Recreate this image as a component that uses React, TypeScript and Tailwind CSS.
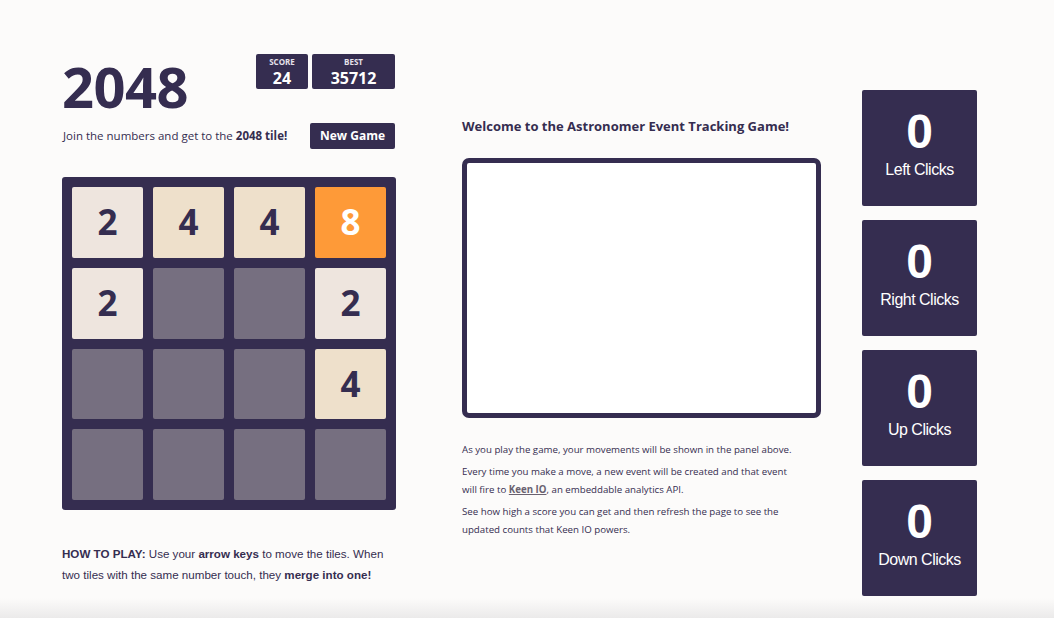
import React from "react";

const tiles: (number | null)[] = [2, 4, 4, 8, 2, null, null, 2, null, null, null, 4, null, null, null, null];

function tileClass(v: number | null) {
  if (v === null) return "bg-[#766f80]";
  if (v === 2) return "bg-[#eee5de] text-[#352d50]";
  if (v === 4) return "bg-[#eee0cb] text-[#352d50]";
  return "bg-[#fe9a38] text-white";
}

const counters = ["Left Clicks", "Right Clicks", "Up Clicks", "Down Clicks"];

export default function App() {
  return (
    <div
      className="relative w-[1054px] h-[618px] overflow-hidden bg-[#fcfbfa] text-[#352d50]"
      style={{ fontFamily: '"Open Sans", "Noto Sans", sans-serif' }}
    >
      <div className="flex pl-[62px]">
        {/* Left column */}
        <div className="w-[334px] pt-[54px]">
          <div className="flex justify-between items-start">
            <h1 className="text-[56px] font-bold leading-none mt-[4px] tracking-[-0.5px]">2048</h1>
            <div className="flex gap-[4px] mr-[1px]">
              <div className="w-[52px] h-[35px] bg-[#352d50] rounded-[2px] flex flex-col items-center justify-center text-white">
                <span className="text-[8px] font-bold leading-none text-[#e5e0ea]">SCORE</span>
                <span className="text-[16px] font-bold leading-none mt-[4px]">24</span>
              </div>
              <div className="w-[83px] h-[35px] bg-[#352d50] rounded-[2px] flex flex-col items-center justify-center text-white">
                <span className="text-[8px] font-bold leading-none text-[#e5e0ea]">BEST</span>
                <span className="text-[16px] font-bold leading-none mt-[4px]">35712</span>
              </div>
            </div>
          </div>
          <div className="flex justify-between items-center mt-[9px]">
            <p className="text-[11.5px] leading-none pl-[1px]">
              Join the numbers and get to the <b>2048 tile!</b>
            </p>
            <button className="w-[85px] h-[26px] mr-[1px] bg-[#352d50] rounded-[2px] text-white text-[12px] font-bold">
              New Game
            </button>
          </div>
          <div className="mt-[28px] w-[334px] h-[333px] bg-[#352d50] rounded-[3px] p-[10px] grid grid-cols-4 grid-rows-4 gap-[10px]">
            {tiles.map((v, i) => (
              <div
                key={i}
                className={`rounded-[2px] flex items-center justify-center text-[35px] font-bold ${tileClass(v)}`}
              >
                {v ?? ""}
              </div>
            ))}
          </div>
          <p
            className="mt-[33px] text-[11.6px] leading-[21px] pr-[6px]"
            style={{ fontFamily: '"Liberation Sans", Arial, sans-serif' }}
          >
            <b>HOW TO PLAY:</b> Use your <b>arrow keys</b> to move the tiles. When two tiles with the same number touch, they{" "}
            <b>merge into one!</b>
          </p>
        </div>

        {/* Middle column */}
        <div className="w-[359px] ml-[66px] pt-[120px]">
          <h2 className="text-[13px] font-bold leading-none">Welcome to the Astronomer Event Tracking Game!</h2>
          <div className="mt-[25px] h-[260px] border-[5px] border-[#352d50] rounded-[7px] bg-white"></div>
          <div className="mt-[23px] text-[9.7px] leading-[18px]">
            <p>As you play the game, your movements will be shown in the panel above.</p>
            <p className="mt-[4px] pr-[20px]">
              Every time you make a move, a new event will be created and that event will fire to{" "}
              <span className="font-bold underline text-[#6a6270]">Keen IO</span>, an embeddable analytics API.
            </p>
            <p className="mt-[4px] pr-[20px]">
              See how high a score you can get and then refresh the page to see the updated counts that Keen IO powers.
            </p>
          </div>
        </div>

        {/* Right column */}
        <div
          className="w-[115px] ml-[41px] pt-[90px] flex flex-col gap-[14px]"
          style={{ fontFamily: '"Liberation Sans", Arial, sans-serif' }}
        >
          {counters.map((c) => (
            <div key={c} className="h-[116px] bg-[#352d50] rounded-[2px] flex flex-col items-center pt-[18px] text-white">
              <span className="text-[48px] font-bold leading-none">0</span>
              <span className="text-[16px] leading-none mt-[6px] tracking-[-0.5px]">{c}</span>
            </div>
          ))}
        </div>
      </div>
      <div className="absolute left-0 right-0 bottom-0 h-[20px] bg-gradient-to-b from-transparent to-[#ebeaea]"></div>
    </div>
  );
}
